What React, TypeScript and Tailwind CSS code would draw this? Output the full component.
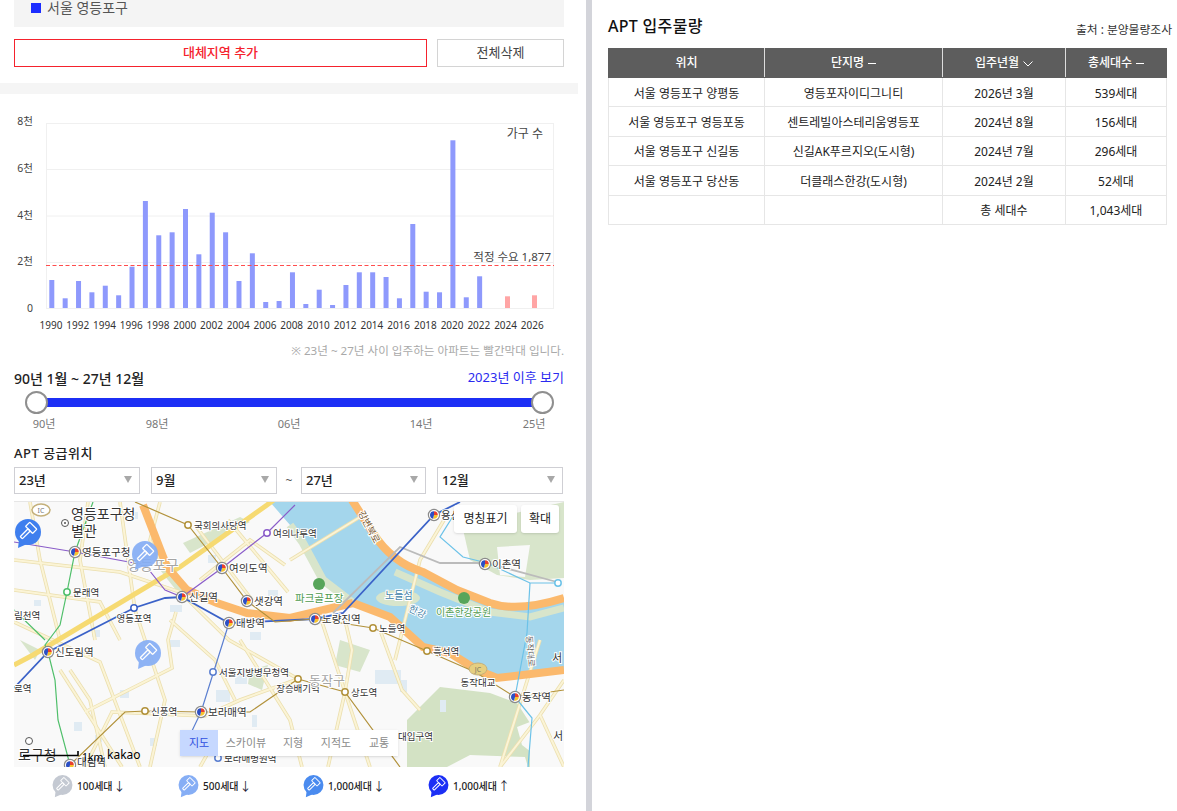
const font = '"Noto Sans", "Noto Sans CJK KR", sans-serif';

const bars = [280, 298.3, 281, 292.3, 285.7, 295.3, 266.7, 201, 235.3, 232.3, 209, 254.3, 212.7, 232.3, 281, 253.3, 302, 301, 272.3, 304, 289.7, 305, 285, 272.3, 272.3, 277, 298.3, 224, 291.7, 292.3, 140.3, 297.3, 276.3];

const rows = [
  ['서울 영등포구 양평동', '영등포자이디그니티', '2026년 3월', '539세대'],
  ['서울 영등포구 영등포동', '센트레빌아스테리움영등포', '2024년 8월', '156세대'],
  ['서울 영등포구 신길동', '신길AK푸르지오(도시형)', '2024년 7월', '296세대'],
  ['서울 영등포구 당산동', '더클래스한강(도시형)', '2024년 2월', '52세대'],
];

// pale streets of the base map
const streets = [
  'M120 502 L128 560 L135 610 L165 700 L150 767',
  'M14 560 L120 572 L180 592 L229 640 L300 680',
  'M14 622 L100 662 L140 767',
  'M85 712 L172 668 L168 640 L176 612',
  'M85 767 L112 712 L205 716 L240 700 L298 679',
  'M200 767 L218 735 L292 735',
  'M395 660 L420 560 L447 515',
  'M500 767 L540 715 L564 680',
  'M540 715 L564 767',
  'M240 640 L290 720 L302 767',
  'M322 622 L345 692 L328 767',
  'M380 630 L402 690 L420 710',
  'M60 670 L122 767',
  'M195 525 L252 600',
  'M228 520 L288 592',
  'M14 590 L100 602 L120 640',
  'M88 502 L80 560 L95 640',
  'M30 502 L40 560 L60 640',
  'M160 502 L150 540 L165 570',
  'M200 580 L250 540 L285 565',
  'M290 560 L360 517',
  'M105 767 L90 700 L70 670',
  'M170 620 L215 660 L235 700',
  'M345 692 L370 767',
  'M540 640 L500 767',
  'M345 620 L352 650 L345 692',
];

const blocks = [
  [130, 512, 8, 7], [34, 600, 7, 6], [92, 630, 8, 7], [120, 690, 9, 8], [74, 722, 8, 9], [95, 735, 7, 7], [170, 640, 10, 7],
  [235, 668, 12, 16], [216, 690, 14, 12], [252, 715, 5, 12], [375, 670, 26, 14], [400, 680, 7, 12], [440, 700, 6, 12],
  [268, 590, 10, 6], [208, 555, 8, 8], [250, 632, 11, 8], [205, 742, 8, 6], [170, 605, 12, 7], [150, 738, 7, 8],
];

function Chart() {
  const years = Array.from({ length: 19 }, (_, i) => 1990 + i * 2);
  return (
    <svg viewBox="0 94 578 246" className="block w-[578px] h-[246px]" style={{ fontFamily: font }}>
      <rect x="46.5" y="123.5" width="507" height="185" fill="#fff" stroke="#f0f0f0" />
      {[169.5, 216, 262.5].map((y) => (
        <line key={y} x1="46" x2="554" y1={y} y2={y} stroke="#f0f0f0" />
      ))}
      {[['8천', 125], ['6천', 172], ['4천', 219], ['2천', 265], ['0', 312]].map(([t, y]) => (
        <text key={t} x="33" y={y} textAnchor="end" fontSize="10.5" fill="#444">{t}</text>
      ))}
      {bars.map((top, i) => (
        <rect key={i} x={49.3 + i * 13.37} y={top} width="5" height={308 - top} fill="#8e99fc" />
      ))}
      <rect x="505" y="296.3" width="5" height="11.7" fill="#ffa5a5" />
      <rect x="532" y="295.3" width="5" height="12.7" fill="#ffa5a5" />
      <line x1="46" x2="554" y1="265.5" y2="265.5" stroke="#ff4d4d" strokeDasharray="4 2.5" />
      {years.map((y, i) => (
        <text key={y} x={51 + i * 26.74} y="329" textAnchor="middle" fontSize="10" fill="#333">{y}</text>
      ))}
      <text x="543" y="138" textAnchor="end" fontSize="12" fill="#444">가구 수</text>
      <text x="551" y="261" textAnchor="end" fontSize="11.5" fill="#444">적정 수요 1,877</text>
    </svg>
  );
}

function PinShape({ fill, opacity = 1 }: { fill: string; opacity?: number }) {
  return (
    <g opacity={opacity}>
      <circle cx="13" cy="13" r="13" fill={fill} />
      <path d="M4 21 L3 29 L12 25 Z" fill={fill} />
      <g fill="none" stroke="#fff" strokeWidth="1.3" transform="rotate(45 13 12)">
        <rect x="8" y="4.5" width="10" height="6" rx="0.6" />
        <rect x="11.5" y="10.5" width="3" height="11" rx="0.6" />
      </g>
    </g>
  );
}

function Label({ x, y, text, anchor = 'start', size = 9.5, fill = '#333', rotate }: { x: number; y: number; text: string; anchor?: any; size?: number; fill?: string; rotate?: number }) {
  return (
    <text
      x={x}
      y={y}
      fontSize={size}
      fill={fill}
      textAnchor={anchor}
      stroke="#fff"
      strokeWidth="2"
      paintOrder="stroke"
      transform={rotate ? `rotate(${rotate} ${x} ${y})` : undefined}
    >
      {text}
    </text>
  );
}

function Station({ x, y, label, dy = 4 }: { x: number; y: number; label: string; dy?: number }) {
  return (
    <g>
      <circle cx={x} cy={y} r="5.6" fill="#fff" stroke="#8a8a8a" strokeWidth="1.2" />
      <path d={`M${x} ${y - 3.8} A3.8 3.8 0 0 1 ${x + 3.8} ${y} L${x} ${y} Z`} fill="#e8402f" />
      <path d={`M${x + 3.8} ${y} A3.8 3.8 0 0 1 ${x - 1} ${y + 3.7} L${x} ${y} Z`} fill="#f7c32e" />
      <path d={`M${x - 1} ${y + 3.7} A3.8 3.8 0 0 1 ${x} ${y - 3.8} L${x} ${y} Z`} fill="#2c4fc4" />
      <Label x={x + 7} y={y + dy} text={label} size={10.5} />
    </g>
  );
}

function Stop({ x, y, label, color, dx = 6, dy = 4, anchor = 'start' }: { x: number; y: number; label: string; color: string; dx?: number; dy?: number; anchor?: string }) {
  return (
    <g>
      <circle cx={x} cy={y} r="3.2" fill="#fff" stroke={color} strokeWidth="1.5" />
      <Label x={x + dx} y={y + dy} text={label} anchor={anchor} size={9.5} />
    </g>
  );
}

function MapArt() {
  return (
    <svg viewBox="14 502 550 265" className="block w-[550px] h-[265px]" style={{ fontFamily: font }}>
      <rect x="14" y="502" width="550" height="265" fill="#f9f9f9" />
      {/* green areas */}
      <path d="M407 767 L407 720 L440 687 L490 693 L517 703 L530 723 L530 767 Z" fill="#d3e2c4" />
      <path d="M517 727 L530 722 L531 752 L522 745 Z M447 767 L470 755 L525 757 L528 767 Z" fill="#f9f9f9" />
      <path d="M462 525 L564 502 L564 578 L530 580 L497 575 L470 560 Z" fill="#d8e5cb" />
      <path d="M497 547 L530 545 L525 577 L500 575 Z" fill="#f9f9f9" />
      <path d="M183 543 L240 517 L250 522 L190 553 Z" fill="#d8e5cb" />
      <path d="M168 560 L190 590 L180 595 L160 570 Z M340 640 L370 650 L360 672 L335 665 Z M20 640 L40 650 L35 660 Z" fill="#d8e5cb" />
      <path d="M250 670 L268 665 L262 690 L248 684 Z" fill="#d8e5cb" />
      {blocks.map(([x, y, w, h]) => (
        <rect key={`${x}-${y}`} x={x} y={y} width={w} height={h} fill="#e0ebf3" />
      ))}
      {/* river */}
      <path d="M270 502 L352 502 L373 533 L390 557 L423 572 L457 590 L490 603 L530 607 L564 598 L564 670 L497 678 L477 670 L450 653 L423 647 L390 617 L353 603 L323 580 L303 543 L290 525 Z" fill="#a4d6ec" />
      <path d="M290 525 L303 543 L323 580 L353 603" fill="none" stroke="#d8e5cb" strokeWidth="8" />
      <path d="M395 572 L440 592 L490 612 L530 617 L564 608" fill="none" stroke="#d8e5cb" strokeWidth="7" />
      <ellipse cx="398" cy="598" rx="22" ry="8" fill="#d8e5cb" />
      {/* streets */}
      <g fill="none" stroke="#ebdfaf" strokeWidth="3.6">
        {streets.map((d) => <path key={d} d={d} />)}
      </g>
      <g fill="none" stroke="#fbf4d6" strokeWidth="2">
        {streets.map((d) => <path key={d} d={d} />)}
      </g>
      <path d="M14 665 L33 655 L180 567 L267 505 L275 499" fill="none" stroke="#f6da72" strokeWidth="5" />
      {/* expressway */}
      <g fill="none" stroke="#fbb96d" strokeWidth="8">
        <path d="M352 500 L373 533 C385 552 400 565 423 572 L457 590 L490 603 C510 610 535 607 564 598" />
        <path d="M353 603 L390 617 L423 647 L450 653 L477 670 L497 678 L564 670" />
        <path d="M143 505 L167 567 L187 590 L217 603 L247 613 L290 618 L353 603" />
      </g>
      {/* rail */}
      <path d="M333 613 L400 547 L440 563 L487 563 L557 582" fill="none" stroke="#bbbbbb" strokeWidth="1.8" />
      {/* metro lines */}
      <g fill="none" strokeWidth="1.2">
        <path d="M14 542 L75 552 L145 565 L165 590 L182 597 L222 568 L267 533 L295 505" stroke="#8a5cc9" />
        <path d="M93 502 L75 552 L67 592 L60 625 L45 645 L48 652 L55 680 L58 720 L70 765" stroke="#4fbf6a" />
        <path d="M14 610 L45 640" stroke="#4fbf6a" />
        <path d="M14 688 L48 652 L134 608 L165 598 L182 597 L200 607 L229 623 L315 619 L343 613 L434 515 L460 502" stroke="#3b62c8" strokeWidth="1.8" />
        <path d="M229 623 L201 712 L190 735 L218 758" stroke="#5b7fd0" />
        <path d="M135 502 L188 525 L222 568 L247 601 L275 622 L315 619 L373 628 L427 651 L475 672 L515 697 L564 690" stroke="#b2923b" />
        <path d="M70 765 L125 712 L145 711 L201 712 L250 712 L298 679" stroke="#b2923b" />
        <path d="M298 679 L345 692 L400 767" stroke="#b2923b" />
        <path d="M460 505 L440 537 L463 557 L487 563 L530 583 L558 583" stroke="#6cc2e8" />
        <path d="M530 583 L527 633 L515 697 L532 718 L528 767" stroke="#6cc2e8" />
      </g>
      <circle cx="558" cy="583" r="3.2" fill="#fff" stroke="#6cc2e8" strokeWidth="1.5" />
      {/* labels, stations */}
      <Label x={71} y={519} text="영등포구청" size={14} />
      <Label x={71} y={536} text="별관" size={14} />
      <circle cx="65" cy="523" r="3.5" fill="#fff" stroke="#555" />
      <circle cx="65" cy="523" r="1" fill="#555" />
      <Label x={127} y={570} text="영등포구" size={14} fill="#a5a5a5" />
      <Station x={75} y={552} label="영등포구청" />
      <Station x={222} y={568} label="여의도역" />
      <Station x={182} y={597} label="신길역" />
      <Station x={247} y={601} label="샛강역" />
      <Station x={229} y={623} label="대방역" />
      <Station x={315} y={619} label="노량진역" />
      <Station x={434} y={515} label="용산역" />
      <Station x={485} y={564} label="이촌역" />
      <Station x={48} y={652} label="신도림역" />
      <Station x={201} y={712} label="보라매역" />
      <Station x={515} y={697} label="동작역" />
      <Station x={70} y={765} label="대림역" dy={1} />
      <Stop x={188} y={525} label="국회의사당역" color="#b2923b" />
      <Stop x={267} y={533} label="여의나루역" color="#8a5cc9" />
      <Stop x={67} y={592} label="문래역" color="#4fbf6a" />
      <Stop x={134} y={608} label="영등포역" color="#3b62c8" dx={0} dy={14} anchor="middle" />
      <Stop x={373} y={628} label="노들역" color="#b2923b" />
      <Stop x={427} y={651} label="흑석역" color="#b2923b" />
      <Stop x={213} y={672} label="서울지방병무청역" color="#5b7fd0" />
      <Stop x={145} y={711} label="신풍역" color="#b2923b" />
      <Stop x={298} y={679} label="장승배기역" color="#b2923b" dx={0} dy={13} anchor="middle" />
      <Stop x={345} y={692} label="상도역" color="#b2923b" />
      <Stop x={218} y={758} label="보라매병원역" color="#5b7fd0" />
      <Label x={14} y={619} text="림천역" />
      <Label x={14} y={692} text="로역" />
      <Label x={18} y={760} text="로구청" size={14} />
      <circle cx="29" cy="741" r="3.5" fill="#fff" stroke="#555" />
      <Label x={398} y={740} text="대입구역" />
      <Label x={478} y={686} text="동작대교" anchor="middle" />
      <Label x={552} y={662} text="서" size={11} />
      <Label x={553} y={740} text="서" size={11} />
      <Label x={309} y={685} text="동작구" size={13} fill="#a5a5a5" />
      <Label x={358} y={513} text="강변북로" size={9.5} fill="#7a5a30" rotate={62} />
      <Label x={295} y={602} text="파크골프장" size={10.5} fill="#4e9a4e" />
      <Label x={385} y={599} text="노들섬" size={10} fill="#3f7fa8" />
      <Label x={408} y={611} text="한강" size={9.5} fill="#3f7fa8" rotate={25} />
      <Label x={436} y={616} text="이촌한강공원" size={10} fill="#4e9a4e" />
      <Label x={526} y={636} text="동작대로" size={8.5} fill="#666" rotate={85} />
      <circle cx="319" cy="584" r="6" fill="#57a55a" />
      <circle cx="464" cy="598" r="6" fill="#57a55a" />
      <ellipse cx="41" cy="510" rx="9" ry="6" fill="#fff" stroke="#c4b07a" strokeWidth="1.5" />
      <text x="41" y="513" fontSize="7" textAnchor="middle" fill="#777">IC</text>
      <ellipse cx="478" cy="669" rx="9" ry="6" fill="#e6cf80" stroke="#c4b07a" />
      <text x="478" y="672" fontSize="7" textAnchor="middle" fill="#776">JC</text>
      {/* auction pins */}
      <g transform="translate(15 519)"><PinShape fill="#3f7fee" /></g>
      <g transform="translate(132 541)"><PinShape fill="#86aef5" opacity={0.92} /></g>
      <g transform="translate(135 640)"><PinShape fill="#86aef5" opacity={0.92} /></g>
      {/* scale */}
      <path d="M23 755.5 H78 M78 751 V756" stroke="#000" strokeWidth="1.6" fill="none" />
      <text x="82" y="761" fontSize="10.5" fill="#000">1km</text>
      <text x="107" y="759" fontSize="12" fill="#000">kakao</text>
    </svg>
  );
}

function Select({ value, className }: { value: string; className: string }) {
  return (
    <div className={`h-[27px] border border-[#cfcfd4] bg-white flex items-center justify-between pl-[4px] pr-[7px] text-[13px] font-medium text-[#222] ${className}`}>
      <span>{value}</span>
      <svg width="8" height="7" viewBox="0 0 8 7" className="mb-[3px]"><path d="M0 0H8L4 7Z" fill="#a8a8a8" /></svg>
    </div>
  );
}

function LegendItem({ fill, label, arrow, width }: { fill: string; label: string; arrow: string; width: string }) {
  return (
    <div className={`flex items-center ${width}`}>
      <svg width="21" height="23" viewBox="0 0 26 30"><PinShape fill={fill} /></svg>
      <span className="ml-[4px] text-[10px] font-medium text-[#222]">{label}</span>
      <span className="ml-[1px] text-[12px] leading-none text-[#223]">{arrow}</span>
    </div>
  );
}

function SortDash() {
  return <span className="inline-block ml-[4px] w-[8px] h-[1px] align-middle bg-white" />;
}

export default function App() {
  return (
    <div className="flex h-[811px] w-[1177px] overflow-hidden bg-white" style={{ fontFamily: font }}>
      {/* left panel */}
      <div className="w-[586px] shrink-0">
        <div className="w-[578px]">
          <div className="px-[14px]">
            <div className="h-[27px] bg-[#f4f4f4] flex items-start pl-[17px]">
              <span className="mt-[3px] w-[10px] h-[10px] bg-[#1c2dff]" />
              <span className="ml-[6px] -mt-[2px] text-[14px] leading-[20px] text-[#555]">서울 영등포구</span>
            </div>
            <div className="mt-[12px] flex justify-between">
              <button className="w-[413px] h-[28px] border border-[#f5222d] text-[13px] font-medium text-[#f5222d]">대체지역 추가</button>
              <button className="w-[127px] h-[28px] border border-[#d4d4d4] text-[13px] text-[#444]">전체삭제</button>
            </div>
          </div>
          <div className="mt-[16px] h-[11px] bg-[#f5f5f5]" />
          <Chart />
          <div className="px-[14px]">
            <p className="mt-[2px] h-[18px] text-right text-[11.6px] leading-[18px] text-[#a9a9a9]">※ 23년 ~ 27년 사이 입주하는 아파트는 빨간막대 입니다.</p>
            <div className="mt-[8px] flex items-center justify-between h-[20px]">
              <span className="text-[14px] font-medium text-[#222]">90년 1월 ~ 27년 12월</span>
              <span className="text-[13px] text-[#2a2af0]">2023년 이후 보기</span>
            </div>
            {/* range slider */}
            <div className="relative mt-[10px] h-[9px] mx-[22px] bg-[#1c2ff5]">
              <span className="absolute -left-[11px] -top-[7px] w-[23px] h-[23px] rounded-full bg-white border-2 border-[#8f8f8f]" />
              <span className="absolute -right-[12px] -top-[7px] w-[23px] h-[23px] rounded-full bg-white border-2 border-[#8f8f8f]" />
            </div>
            <div className="mt-[8px] h-[18px] flex pl-[18px] text-[11px] leading-[18px] text-[#777] whitespace-nowrap">
              <span className="w-[24px] text-center">90년</span>
              <span className="w-[24px] text-center ml-[89px]">98년</span>
              <span className="w-[24px] text-center ml-[108px]">06년</span>
              <span className="w-[24px] text-center ml-[108px]">14년</span>
              <span className="w-[24px] text-center ml-[89px]">25년</span>
            </div>
            <div className="mt-[10px] h-[20px] text-[13px] leading-[20px] font-medium tracking-[0.5px] text-[#222]">APT 공급위치</div>
            <div className="mt-[4px] flex items-center">
              <Select value="23년" className="w-[126px]" />
              <Select value="9월" className="w-[126px] ml-[11px]" />
              <span className="w-[24px] text-center text-[12px] text-[#555]">~</span>
              <Select value="27년" className="w-[125px]" />
              <Select value="12월" className="w-[126px] ml-[11px]" />
            </div>
            {/* map */}
            <div className="relative mt-[7px] w-[550px] h-[266px] border-t border-[#e6e6e6] overflow-hidden">
              <MapArt />
              <div className="absolute top-[3px] right-[5px] flex gap-[4px] text-[12px] text-[#222]">
                <span className="w-[63px] h-[28px] flex items-center justify-center bg-white rounded-[3px] shadow-sm">명칭표기</span>
                <span className="w-[38px] h-[28px] flex items-center justify-center bg-white rounded-[3px] shadow-sm">확대</span>
              </div>
              <div className="absolute left-[166px] top-[228px] flex h-[26px] w-[218px] bg-white text-[11px] text-[#8a8a8a] shadow-sm">
                <span className="w-[38px] flex items-center justify-center bg-[#c6d8ff] text-[#2f4fe0]">지도</span>
                <span className="w-[56px] flex items-center justify-center">스카이뷰</span>
                <span className="w-[38px] flex items-center justify-center">지형</span>
                <span className="w-[48px] flex items-center justify-center">지적도</span>
                <span className="w-[38px] flex items-center justify-center">교통</span>
              </div>
            </div>
            <div className="mt-[8px] flex pl-[38px]">
              <LegendItem fill="#c4c9d2" label="100세대" arrow="↓" width="w-[126px]" />
              <LegendItem fill="#86aef5" label="500세대" arrow="↓" width="w-[125px]" />
              <LegendItem fill="#4a8bef" label="1,000세대" arrow="↓" width="w-[125px]" />
              <LegendItem fill="#1c2ff5" label="1,000세대" arrow="↑" width="w-[125px]" />
            </div>
          </div>
        </div>
      </div>
      <div className="w-[6px] shrink-0 bg-[#d3d4da]" />
      {/* right panel */}
      <div className="flex-1 pl-[16px] pr-[5px]">
        <div className="h-[48px] flex items-start justify-between">
          <h2 className="mt-[14px] text-[16px] leading-[24px] font-medium tracking-[0.3px] text-[#111]">APT 입주물량</h2>
          <span className="mt-[20px] text-[11.8px] leading-[18px] text-[#333]">출처 : 분양물량조사</span>
        </div>
        <table className="w-[558px] table-fixed border-collapse text-[12px] text-[#222]">
          <colgroup>
            <col className="w-[156px]" />
            <col className="w-[178px]" />
            <col className="w-[123px]" />
            <col className="w-[101px]" />
          </colgroup>
          <thead>
            <tr className="h-[29px] bg-[#5d5d5d] text-white">
              <th className="border border-[#5d5d5d] border-r-[#dddddd] font-medium">위치</th>
              <th className="border border-[#5d5d5d] border-r-[#dddddd] font-medium">단지명<SortDash /></th>
              <th className="border border-[#5d5d5d] border-r-[#dddddd] font-medium">
                입주년월
                <svg width="10" height="6" viewBox="0 0 10 6" className="inline-block ml-[4px] align-middle"><path d="M0.5 0.5L5 5L9.5 0.5" fill="none" stroke="#fff" /></svg>
              </th>
              <th className="border border-[#5d5d5d] font-medium">총세대수<SortDash /></th>
            </tr>
          </thead>
          <tbody>
            {rows.map((row) => (
              <tr key={row[0]} className="h-[29.4px]">
                {row.map((cell, i) => (
                  <td key={i} className="border border-[#e6e6e6] text-center pt-[3px]">{cell}</td>
                ))}
              </tr>
            ))}
            <tr className="h-[29.4px]">
              <td className="border border-[#e6e6e6]" />
              <td className="border border-[#e6e6e6]" />
              <td className="border border-[#e6e6e6] text-center pt-[3px]">총 세대수</td>
              <td className="border border-[#e6e6e6] text-center pt-[3px]">1,043세대</td>
            </tr>
          </tbody>
        </table>
      </div>
    </div>
  );
}
